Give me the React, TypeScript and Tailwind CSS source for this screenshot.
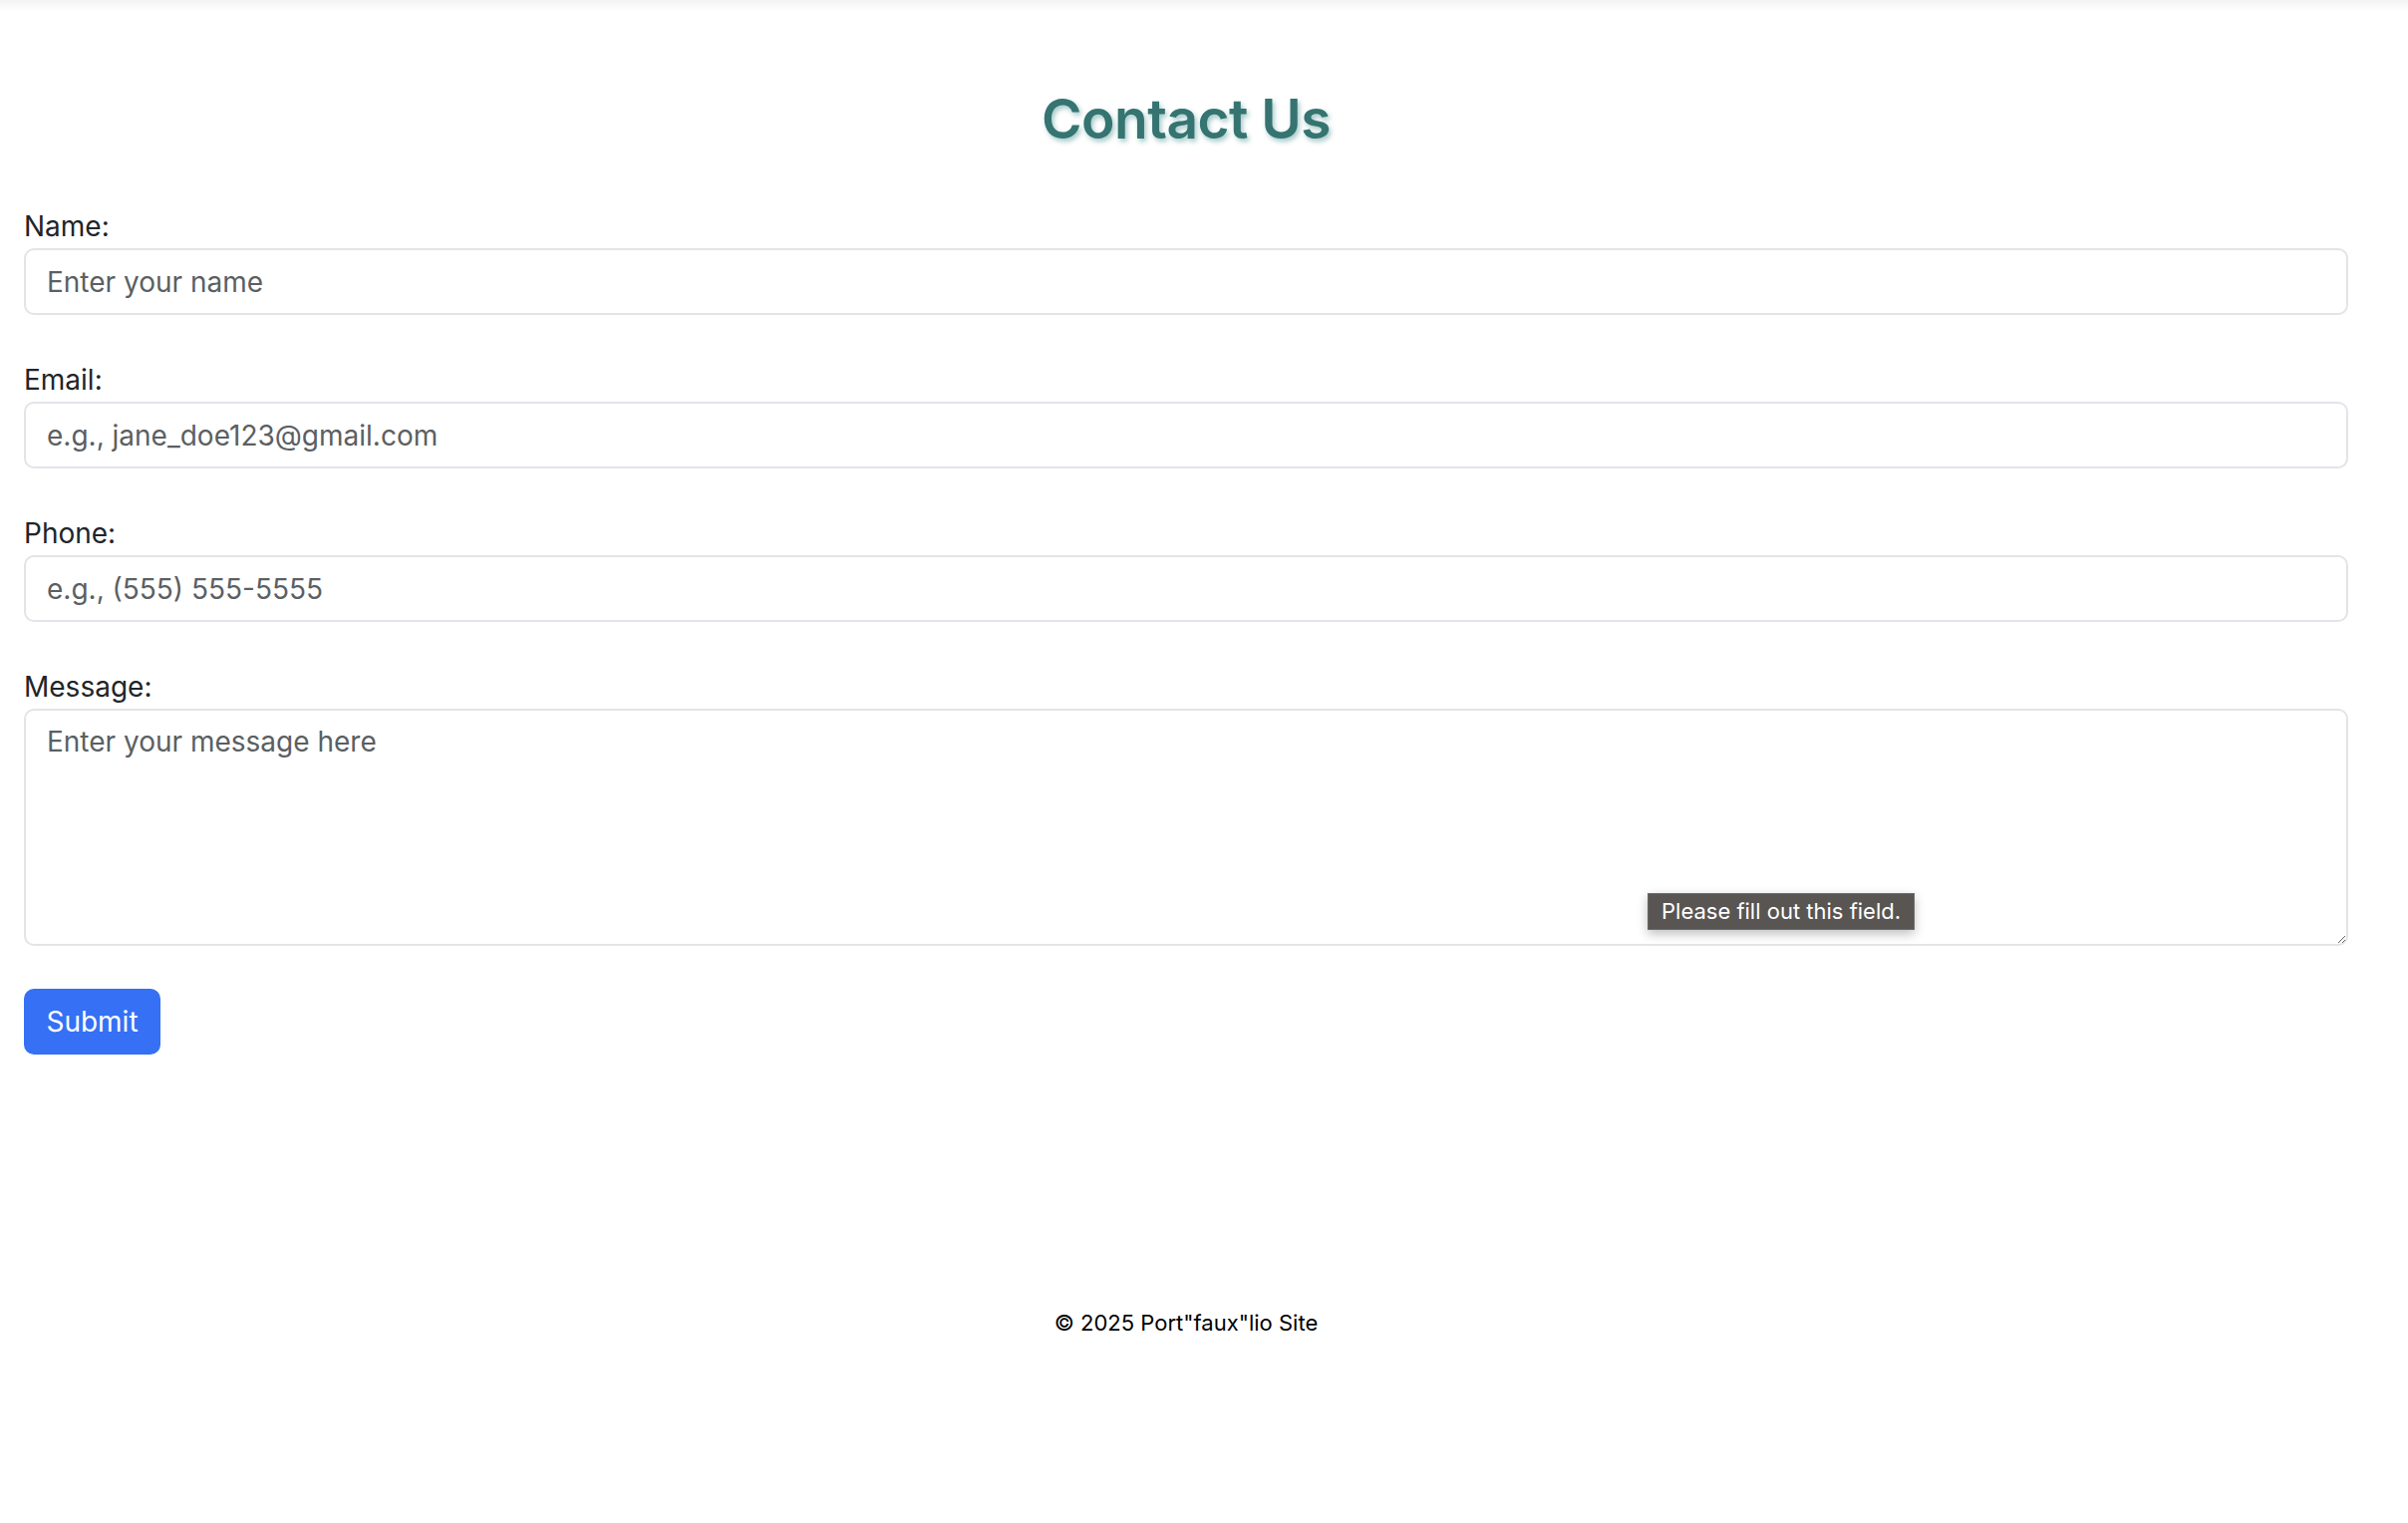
import React from "react";

const font = { fontFamily: 'Inter, "Liberation Sans", Arial, sans-serif' };

function Field({ label, placeholder, type = "text" }: { label: string; placeholder: string; type?: string }) {
  return (
    <div className="flex flex-col mb-[44px]">
      <label className="text-[28px] leading-[42px] text-[#212529] mb-px">{label}</label>
      <input
        type={type}
        placeholder={placeholder}
        className="w-full h-[67px] px-[21px] text-[28px] text-[#212529] placeholder:text-[#5b5f63] border-[2px] border-[#e2e4e8] rounded-[10px] bg-white outline-none"
      />
    </div>
  );
}

export default function App() {
  return (
    <div className="relative min-h-[1528px] bg-white" style={font}>
      <div className="h-[12px] bg-gradient-to-b from-[#f3f3f3] to-white" />
      <div className="pl-[24px] pr-[60px]">
        <h2
          className="text-center text-[55px] leading-[67px] font-semibold text-[#357470] mt-[74px] mb-[53px] tracking-[-0.5px]"
          style={{ textShadow: "2px 3px 5px rgba(50,130,130,0.45)" }}
        >
          Contact Us
        </h2>
        <form className="flex flex-col">
          <Field label="Name:" placeholder="Enter your name" />
          <Field label="Email:" placeholder="e.g., jane_doe123@gmail.com" type="email" />
          <Field label="Phone:" placeholder="e.g., (555) 555-5555" type="tel" />
          <div className="relative flex flex-col mb-[43px]">
            <label className="text-[28px] leading-[42px] text-[#212529] mb-px">Message:</label>
            <textarea
              placeholder="Enter your message here"
              className="w-full h-[238px] px-[21px] py-[10px] text-[28px] leading-[42px] text-[#212529] placeholder:text-[#5b5f63] border-[2px] border-[#e2e4e8] rounded-[10px] bg-white outline-none resize-y"
            />
            <div className="absolute left-[1629px] top-[228px] h-[37px] px-[13px] flex items-center bg-[#595552] border border-[#6e6a67] text-white text-[22px] shadow-[0_4px_10px_rgba(0,0,0,0.25)]">
              Please fill out this field.
            </div>
          </div>
          <div>
            <button
              type="button"
              className="h-[66px] w-[137px] rounded-[10px] bg-[#3570f5] text-white text-[28px]"
            >
              Submit
            </button>
          </div>
        </form>
        <footer className="text-center text-[22px] text-black mt-[253px]">
          © 2025 Port"faux"lio Site
        </footer>
      </div>
    </div>
  );
}
